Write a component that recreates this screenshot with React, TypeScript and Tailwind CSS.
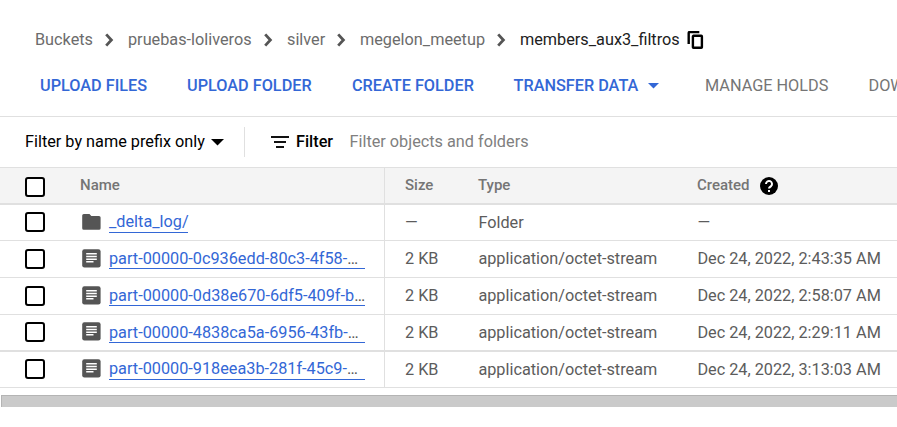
import React from "react";

const crumbs = [
  { label: "Buckets", width: "w-[57px]" },
  { label: "pruebas-loliveros", width: "w-[123px]" },
  { label: "silver", width: "w-[37px]" },
  { label: "megelon_meetup", width: "w-[124px]" },
];

const rows = [
  { name: "_delta_log/", folder: true, size: "—", type: "Folder", created: "—", height: "h-[36px]", border: "border-b", offset: "mt-[7px]", text: "pt-0" },
  { name: "part-00000-0c936edd-80c3-4f58-", size: "2 KB", type: "application/octet-stream", created: "Dec 24, 2022, 2:43:35 AM", height: "h-[37px]", border: "border-b", offset: "mt-2", text: "pt-px" },
  { name: "part-00000-0d38e670-6df5-409f-b", size: "2 KB", type: "application/octet-stream", created: "Dec 24, 2022, 2:58:07 AM", height: "h-[37px]", border: "border-b", offset: "mt-2", text: "pt-px" },
  { name: "part-00000-4838ca5a-6956-43fb-", size: "2 KB", type: "application/octet-stream", created: "Dec 24, 2022, 2:29:11 AM", height: "h-[37px]", border: "border-b-2", offset: "mt-[7px]", text: "pt-px" },
  { name: "part-00000-918eea3b-281f-45c9-", size: "2 KB", type: "application/octet-stream", created: "Dec 24, 2022, 3:13:03 AM", height: "h-[36px]", border: "border-b", offset: "mt-[7px]", text: "pt-0" },
];

function Chevron() {
  return (
    <svg className="ml-[13px] mr-[14px] h-[14px] w-[9px] shrink-0" viewBox="0 0 9 14" fill="none" stroke="#555" strokeWidth="2.8">
      <path d="M1.2 1.4 6.4 7 1.2 12.6" />
    </svg>
  );
}

function CopyIcon() {
  return (
    <svg className="ml-2 h-[19px] w-[17px] shrink-0" viewBox="0 0 17 19" fill="none" stroke="#000" strokeWidth="2.4">
      <path d="M1.7 13V2c0-.6.4-1 1-1H12.3" />
      <rect x="5.9" y="4.8" width="9" height="12" rx=".6" />
    </svg>
  );
}

function Checkbox() {
  return <span className="box-border block size-5 shrink-0 rounded-[3px] border-2 border-black bg-white" />;
}

function FolderIcon() {
  return (
    <svg className="mt-[2px] h-4 w-[19px] shrink-0" viewBox="0 0 19 16" fill="#555">
      <path d="M1.8 0H7.5L9.3 2H17a1.6 1.6 0 0 1 1.6 1.6v10.6A1.6 1.6 0 0 1 17 15.8H1.8A1.6 1.6 0 0 1 .2 14.2V1.6A1.6 1.6 0 0 1 1.8 0Z" />
    </svg>
  );
}

function FileIcon() {
  return (
    <svg className="h-[19px] w-[19px] shrink-0" viewBox="0 0 19 19">
      <rect x=".2" y=".3" width="18.4" height="18.2" rx="2.2" fill="#555" />
      <path d="M4.2 4.8h10.6M4.2 7.5h10.6M4.2 10.2h10.6M4.2 12.8h7.3" stroke="#fff" strokeWidth="1.4" />
    </svg>
  );
}

export default function App() {
  return (
    <div className="h-[427px] w-[897px] overflow-hidden whitespace-nowrap bg-white pt-5 font-[Roboto,sans-serif] text-[16.25px] leading-5 text-[#5c5c5c]">
      <nav className="flex h-10 items-center pl-[35px] text-[#6c6c6c]">
        {crumbs.map((c) => (
          <React.Fragment key={c.label}>
            <span className={c.width}>{c.label}</span>
            <Chevron />
          </React.Fragment>
        ))}
        <span className="w-[159px] text-[#212121]">members_aux3_filtros</span>
        <CopyIcon />
      </nav>

      <div className="flex h-14 items-center pb-[5px] pl-10 font-medium text-[#3367d6]">
        <span className="w-[147px] shrink-0">UPLOAD FILES</span>
        <span className="w-[165px] shrink-0">UPLOAD FOLDER</span>
        <span className="w-[161.5px] shrink-0">CREATE FOLDER</span>
        <span className="w-[134.5px] shrink-0">TRANSFER DATA</span>
        <svg className="mr-[46px] h-[6px] w-[11px] shrink-0" viewBox="0 0 11 6" fill="#3367d6"><path d="M0 0h11L5.5 5.5z" /></svg>
        <span className="w-[163.5px] shrink-0 font-normal text-[#757575]">MANAGE HOLDS</span>
        <span className="shrink-0 font-normal text-[#757575]">DOWNLOAD</span>
      </div>

      <div className="flex h-[52px] items-center border-y border-[#e0e0e0] pl-[25px]">
        <span className="w-[186px] text-black">Filter by name prefix only</span>
        <svg className="h-[7px] w-[13px] shrink-0" viewBox="0 0 13 7" fill="#000"><path d="M0 0h13L6.5 6.5z" /></svg>
        <span className="ml-5 h-[30px] w-px bg-[#e0e0e0]" />
        <svg className="ml-[26px] mr-[7px] h-3 w-[18px] shrink-0" viewBox="0 0 18 12" fill="#111"><path d="M0 0h18v2H0zM3 5h12v2H3zM5 10h8v2H5z" /></svg>
        <span className="w-[53.5px] font-medium text-black">Filter</span>
        <span className="text-[#808080]">Filter objects and folders</span>
      </div>

      <div className="flex h-[37px] border-b-2 border-[#e0e0e0] bg-[#f4f4f4] text-[15px] font-medium text-[#757575]">
        <div className="flex w-[385px] shrink-0 border-r border-[#e0e0e0] pl-[25px]">
          <span className="pt-[9px]"><Checkbox /></span>
          <span className="ml-[35px] pt-[7px]">Name</span>
        </div>
        <div className="flex pl-5 pt-[7px]">
          <span className="w-[73px]">Size</span>
          <span className="w-[219px]">Type</span>
          <span className="w-[62.5px]">Created</span>
          <svg className="mt-[2px] size-[18px]" viewBox="0 0 18 18">
            <circle cx="9" cy="9" r="9" fill="#000" />
            <path d="M6 7a3 3 0 1 1 5.1 2.1C9.8 10.1 9 10.4 9 11.6" fill="none" stroke="#fff" strokeWidth="2" />
            <path d="M8 13h2v2H8z" fill="#fff" />
          </svg>
        </div>
      </div>

      {rows.map((r) => (
        <div key={r.name} className={`box-border flex border-[#e0e0e0] ${r.height} ${r.border}`}>
          <div className="flex w-[385px] shrink-0 items-start border-r border-[#e0e0e0] pl-[25px]">
            <span className={`flex ${r.offset}`}>
              <Checkbox />
              <span className="ml-[37px] flex w-[27px] items-start">{r.folder ? <FolderIcon /> : <FileIcon />}</span>
            </span>
            <span className={`mt-[7px] box-border h-[21px] border-b border-[#3367d6] text-[#3367d6] ${r.text} ${r.folder ? "w-[79px]" : "w-[256px]"}`}>
              {r.name}
              {!r.folder && <span className="text-[#555]">…</span>}
            </span>
          </div>
          <div className="flex items-center pl-5">
            <span className="w-[73.4px]">{r.size}</span>
            <span className="w-[219px]">{r.type}</span>
            <span>{r.created}</span>
          </div>
        </div>
      ))}

      <div className="ml-px mt-[7px] h-3 border-l border-t border-[#b4b4b4] bg-[#cacaca]" />
    </div>
  );
}
